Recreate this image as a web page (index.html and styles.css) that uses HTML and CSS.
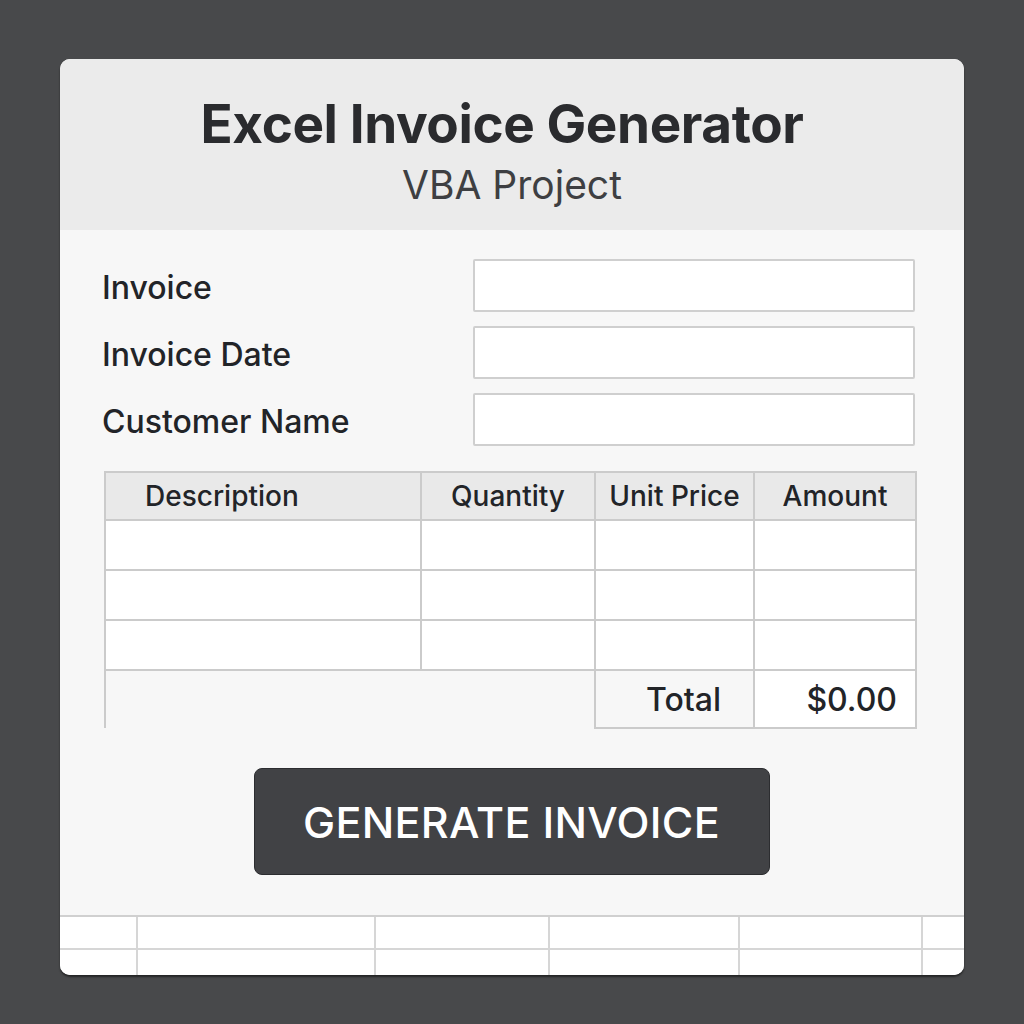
FILE: index.html
```html
<!DOCTYPE html>
<html>
<head>
<meta charset="utf-8">
<link rel="stylesheet" href="styles.css">
</head>
<body>
<div class="card">
  <header class="head">
    <h1 class="title">Excel Invoice Generator</h1>
    <div class="subtitle">VBA Project</div>
  </header>
  <main class="body">
    <div class="form">
      <label class="label">Invoice</label><div class="input"></div>
      <label class="label">Invoice Date</label><div class="input"></div>
      <label class="label">Customer Name</label><div class="input"></div>
    </div>
    <table class="items">
      <colgroup><col class="c1"><col class="c2"><col class="c3"><col class="c4"></colgroup>
      <thead>
        <tr><th class="desc">Description</th><th>Quantity</th><th>Unit Price</th><th>Amount</th></tr>
      </thead>
      <tbody>
        <tr><td></td><td></td><td></td><td></td></tr>
        <tr><td></td><td></td><td></td><td></td></tr>
        <tr><td></td><td></td><td></td><td></td></tr>
        <tr class="total"><td class="blank" colspan="2"></td><td class="tlabel">Total</td><td class="tval">$0.00</td></tr>
      </tbody>
    </table>
    <div class="actions"><button class="btn">GENERATE INVOICE</button></div>
  </main>
  <div class="sheet">
    <div class="srow"><span class="s1"></span><span class="s2"></span><span class="s3"></span><span class="s4"></span><span class="s5"></span><span class="s6"></span></div>
    <div class="srow"><span class="s1"></span><span class="s2"></span><span class="s3"></span><span class="s4"></span><span class="s5"></span><span class="s6"></span></div>
  </div>
</div>
</body>
</html>
```
FILE: styles.css
```css
* { box-sizing: border-box; }
html, body { margin: 0; padding: 0; }
body {
  background: #48494b;
  font-family: Inter, "Noto Sans", "Liberation Sans", sans-serif;
  color: #222428;
  width: 1024px;
  height: 1024px;
  padding: 59px 60px 0 60px;
}
.card {
  width: 904px;
  height: 916px;
  background: #f7f7f7;
  border-radius: 10px;
  overflow: hidden;
  display: flex;
  flex-direction: column;
  box-shadow: 0 2px 2px rgba(0,0,0,0.5);
}
.head {
  background: #ebebeb;
  height: 171px;
  display: flex;
  flex-direction: column;
  align-items: center;
  padding-top: 30px;
}
.title {
  margin: 0;
  padding-right: 20px;
  font-size: 53px;
  font-weight: 700;
  letter-spacing: -0.4px;
  line-height: 70px;
  color: #2a2b2e;
}
.subtitle {
  font-size: 39px;
  font-weight: 400;
  color: #3e3f42;
  line-height: 46px;
  margin-top: 3px;
}
.body {
  flex: 1;
  padding: 29px 49px 0 42px;
}
.form {
  display: grid;
  grid-template-columns: 371px 442px;
  row-gap: 14px;
  align-items: center;
}
.label {
  font-size: 32px;
  font-weight: 500;
  color: #222428;
  padding-top: 3px;
}
.input {
  height: 53px;
  background: #fff;
  border: 2px solid #cfcfcf;
  border-radius: 2px;
}
.items {
  margin: 25px 0 0 2px;
  width: 811px;
  border-collapse: collapse;
  table-layout: fixed;
}
.c1 { width: 316px; }
.c2 { width: 174px; }
.c3 { width: 159px; }
.c4 { width: 162px; }
.items th, .items td {
  border: 2px solid #cbcbcb;
  padding: 0;
}
.items th {
  background: #e9e9e9;
  height: 48px;
  font-size: 28px;
  font-weight: 500;
  color: #222428;
  text-align: center;
}
.items th.desc { text-align: left; padding-left: 39px; }
.items td { background: #fff; height: 50px; }
.items tr.total td { height: 58px; font-size: 32px; font-weight: 500; text-align: right; }
.items td.blank {
  background: transparent;
  border-bottom: none;
  border-right: 2px solid #cbcbcb;
}
.items td.tlabel { background: #f7f7f7; padding-right: 32px; }
.items td.tval { background: #fff; padding-right: 18px; font-weight: 400; font-size: 31px; }
.actions {
  display: flex;
  justify-content: center;
  margin-top: 39px;
}
.btn {
  width: 516px;
  height: 107px;
  margin-left: 6px;
  background: #414245;
  border: 1.5px solid #2c2d30;
  border-radius: 8px;
  color: #fff;
  font-family: Inter, "Noto Sans", "Liberation Sans", sans-serif;
  font-size: 43px;
  font-weight: 500;
  letter-spacing: 0.3px;
}
.sheet {
  height: 60px;
  background: #fff;
  border-top: 2px solid #d0d0d0;
}
.srow {
  display: flex;
  height: 33px;
  border-bottom: 2px solid #d6d6d6;
}
.srow span { border-right: 2px solid #d6d6d6; }
.s1 { width: 78px; }
.s2 { width: 238px; }
.s3 { width: 174px; }
.s4 { width: 190px; }
.s5 { width: 183px; }
.s6 { flex: 1; border-right: none !important; }
```
